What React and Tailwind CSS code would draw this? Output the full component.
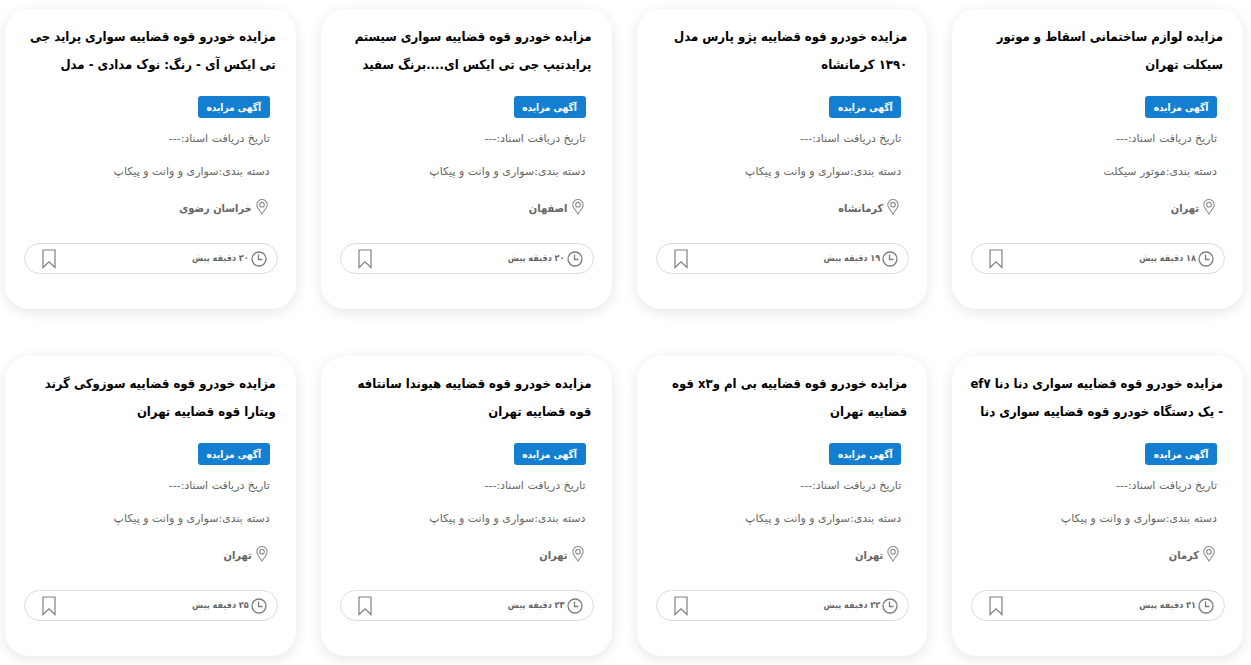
import React from 'react';

const SEDAN = 'سواری و وانت و پیکاپ';

const ADS = [
  { id: 1, title: ['مزایده لوازم ساختمانی اسقاط و موتور', 'سیکلت تهران'], category: 'موتور سیکلت', city: 'تهران', time: '۱۸ دقیقه پیش' },
  { id: 2, title: ['مزایده خودرو قوه قضاییه پژو پارس مدل', '۱۳۹۰ کرمانشاه'], category: SEDAN, city: 'کرمانشاه', time: '۱۹ دقیقه پیش' },
  { id: 3, title: ['مزایده خودرو قوه قضاییه سواری سیستم', 'پرایدتیپ جی تی ایکس ای....برنگ سفید'], category: SEDAN, city: 'اصفهان', time: '۲۰ دقیقه پیش' },
  { id: 4, title: ['مزایده خودرو قوه قضاییه سواری پراید جی', 'تی ایکس آی - رنگ: نوک مدادی - مدل'], category: SEDAN, city: 'خراسان رضوی', time: '۲۰ دقیقه پیش' },
  { id: 5, title: ['مزایده خودرو قوه قضاییه سواری دنا دنا ef۷', '- یک دستگاه خودرو قوه قضاییه سواری دنا'], category: SEDAN, city: 'کرمان', time: '۲۱ دقیقه پیش' },
  { id: 6, title: ['مزایده خودرو قوه قضاییه بی ام وx۳ قوه', 'قضاییه تهران'], category: SEDAN, city: 'تهران', time: '۲۲ دقیقه پیش' },
  { id: 7, title: ['مزایده خودرو قوه قضاییه هیوندا سانتافه', 'قوه قضاییه تهران'], category: SEDAN, city: 'تهران', time: '۲۳ دقیقه پیش' },
  { id: 8, title: ['مزایده خودرو قوه قضاییه سوزوکی گرند', 'ویتارا قوه قضاییه تهران'], category: SEDAN, city: 'تهران', time: '۲۵ دقیقه پیش' },
];

function PinIcon() {
  return (
    <svg className="mb-1 h-4 w-3 shrink-0" viewBox="0 0 12 16" fill="none" stroke="#8f8f8f" strokeWidth="1.1" aria-hidden="true">
      <path d="M6 15C5 12.6 .8 9 .8 5.7a5.2 5.2 0 0 1 10.4 0C11.2 9 7 12.6 6 15Z" />
      <circle cx="6" cy="5.7" r="2.3" />
    </svg>
  );
}

function ClockIcon() {
  return (
    <svg className="size-4 shrink-0" viewBox="0 0 16 16" fill="none" stroke="#7d7d7d" strokeWidth="1.3" aria-hidden="true">
      <circle cx="8" cy="8" r="7" />
      <path d="M7.5 3.5V8.5H11.5" />
    </svg>
  );
}

function BookmarkIcon() {
  return (
    <svg className="h-5 w-3.5" viewBox="0 0 14 20" fill="none" stroke="#808080" strokeWidth="1.2" aria-hidden="true">
      <path d="M1 1H13V18.5L7 12.8L1 18.5Z" />
    </svg>
  );
}

function AdCard({ ad }) {
  return (
    <article className="rounded-3xl bg-white pt-3.5 pb-[35px] shadow-[0_3px_14px_rgba(0,0,0,0.1)]">
      <h2 className="pr-5 font-['DejaVu_Sans_Condensed',sans-serif] text-[13px] leading-7 font-bold text-black">
        <a href="#" className="block">
          {ad.title.map(line => (
            <span key={line} className="block whitespace-nowrap">{line}</span>
          ))}
        </a>
      </h2>

      <div className="mt-[17px] pr-[26px] text-[#666]">
        <span className="flex h-[22px] w-[72px] items-center justify-center rounded-[3px] bg-[#147fd1] font-['DejaVu_Sans_Condensed',sans-serif] text-[10px] font-bold whitespace-nowrap text-white">
          آگهی مزایده
        </span>
        <p className="mt-[11px] text-[11px] leading-5">تاریخ دریافت اسناد:---</p>
        <p className="mt-[13px] text-[11px] leading-5">دسته بندی:{ad.category}</p>
        <div className="mt-[17px] flex h-5 items-center gap-1 pr-0.5">
          <PinIcon />
          <span className="font-['DejaVu_Sans_Condensed',sans-serif] text-[11px] font-bold">{ad.city}</span>
        </div>
      </div>

      <div className="mr-[18px] ml-[19px] mt-6 flex h-[31px] items-center justify-between rounded-2xl border border-[#dcdcdc] pr-2.5 pl-[17px]">
        <div className="flex items-center gap-0.5 font-['DejaVu_Sans_Condensed',sans-serif] text-[9px] font-bold text-[#666]">
          <ClockIcon />
          <time>{ad.time}</time>
        </div>
        <button type="button" aria-label="نشان کردن">
          <BookmarkIcon />
        </button>
      </div>
    </article>
  );
}

export default function App() {
  return (
    <main dir="rtl" className="bg-white pt-[9px] pr-2 pb-2 pl-[5px] font-['DejaVu_Sans',sans-serif]">
      <div className="grid grid-cols-4 gap-x-[25px] gap-y-[47px]">
        {ADS.map(ad => (
          <AdCard key={ad.id} ad={ad} />
        ))}
      </div>
    </main>
  );
}
